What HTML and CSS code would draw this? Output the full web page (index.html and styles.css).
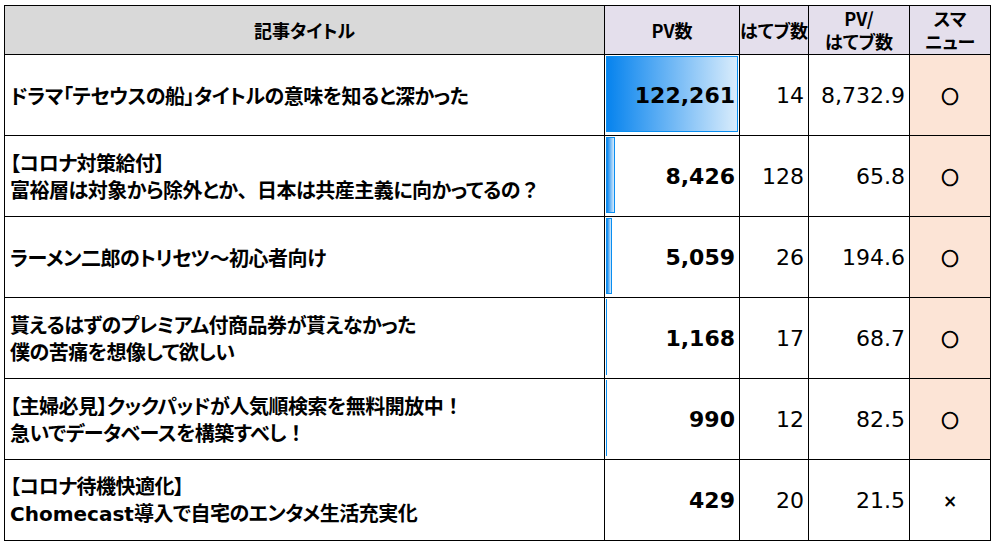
FILE: index.html
```html
<!DOCTYPE html>
<html lang="ja">
<head>
<meta charset="utf-8">
<title>記事ランキング</title>
<link rel="stylesheet" href="styles.css">
</head>
<body>
<table class="sheet">
  <colgroup>
    <col class="c-title">
    <col class="c-pv">
    <col class="c-hb">
    <col class="c-ratio">
    <col class="c-sm">
  </colgroup>
  <thead>
    <tr class="head">
      <th class="h-title">記事タイトル</th>
      <th class="h-lav">PV数</th>
      <th class="h-lav">はてブ数</th>
      <th class="h-lav"><span class="hl">PV/</span><span class="hl">はてブ数</span></th>
      <th class="h-lav"><span class="hl">スマ</span><span class="hl">ニュー</span></th>
    </tr>
  </thead>
  <tbody>
    <tr class="row">
      <td class="title">ドラマ「テセウスの船」タイトルの意味を知ると深かった</td>
      <td class="pv"><div class="pvwrap"><span class="bar" style="width:132px"></span><span class="num">122,261</span></div></td>
      <td class="val">14</td>
      <td class="val">8,732.9</td>
      <td class="sm peach"><span class="mark">○</span></td>
    </tr>
    <tr class="row">
      <td class="title">【コロナ対策給付】<br>富裕層は対象から除外とか<span class="fw">、</span>日本は共産主義に向かってるの<span class="fw">？</span></td>
      <td class="pv"><div class="pvwrap"><span class="bar" style="width:9px"></span><span class="num">8,426</span></div></td>
      <td class="val">128</td>
      <td class="val">65.8</td>
      <td class="sm peach"><span class="mark">○</span></td>
    </tr>
    <tr class="row">
      <td class="title">ラーメン二郎のトリセツ～初心者向け</td>
      <td class="pv"><div class="pvwrap"><span class="bar" style="width:5.5px"></span><span class="num">5,059</span></div></td>
      <td class="val">26</td>
      <td class="val">194.6</td>
      <td class="sm peach"><span class="mark">○</span></td>
    </tr>
    <tr class="row">
      <td class="title">貰えるはずのプレミアム付商品券が貰えなかった<br>僕の苦痛を想像して欲しい</td>
      <td class="pv"><div class="pvwrap"><span class="bar thin" style="width:1px"></span><span class="num">1,168</span></div></td>
      <td class="val">17</td>
      <td class="val">68.7</td>
      <td class="sm peach"><span class="mark">○</span></td>
    </tr>
    <tr class="row">
      <td class="title">【主婦必見】クックパッドが人気順検索を無料開放中<span class="fw">！</span><br>急いでデータベースを構築すべし<span class="fw">！</span></td>
      <td class="pv"><div class="pvwrap"><span class="bar thin" style="width:1px"></span><span class="num">990</span></div></td>
      <td class="val">12</td>
      <td class="val">82.5</td>
      <td class="sm peach"><span class="mark">○</span></td>
    </tr>
    <tr class="row">
      <td class="title">【コロナ待機快適化】<br><span class="latin">Chomecast</span>導入で自宅のエンタメ生活充実化</td>
      <td class="pv"><div class="pvwrap"><span class="num">429</span></div></td>
      <td class="val">20</td>
      <td class="val">21.5</td>
      <td class="sm"><span class="cross">×</span></td>
    </tr>
  </tbody>
</table>
</body>
</html>
```
FILE: styles.css
```css
html, body {
  margin: 0;
  padding: 0;
  background: #ffffff;
}
body {
  padding: 5px 0 0 4px;
  font-family: "Noto Sans CJK JP", "Noto Sans", sans-serif;
  color: #000;
}
.sheet {
  border-collapse: collapse;
  table-layout: fixed;
  width: 987px;
}
.c-title { width: 600px; }
.c-pv { width: 135px; }
.c-hb { width: 69px; }
.c-ratio { width: 101px; }
.c-sm { width: 81px; }

.sheet th, .sheet td {
  border: 1px solid #000;
  padding: 0;
}
.head { height: 49px; }
.row { height: 81px; }

.sheet th {
  font-weight: bold;
  font-size: 18px;
  line-height: 23px;
  text-align: center;
  white-space: nowrap;
  font-feature-settings: "palt";
}
.hl {
  display: block;
  height: 23px;
  line-height: 23px;
}
.h-title { background: #d9d9d9; }
.h-lav { background: #e4dfec; }

.title {
  font-weight: bold;
  font-size: 20px;
  line-height: 27px;
  letter-spacing: -0.5px;
  padding-left: 5px !important;
  white-space: nowrap;
  font-feature-settings: "palt";
  vertical-align: middle;
}
.fw {
  font-feature-settings: normal;
}
.latin {
  font-family: "DejaVu Sans", sans-serif;
  letter-spacing: 0;
}

.pv {
  height: 80px;
  vertical-align: top;
}
.pvwrap {
  position: relative;
  height: 80px;
  display: flex;
  align-items: center;
  justify-content: flex-end;
  padding-right: 4px;
}
.bar {
  position: absolute;
  left: 1px;
  top: 1px;
  bottom: 3px;
  box-sizing: border-box;
  border: 1px solid #0a8ef0;
  background: linear-gradient(to right, #0683ee 0%, #d9ecfc 100%);
}
.bar.thin {
  border-width: 0 0 0 1px;
}
.num {
  position: relative;
  font-family: "DejaVu Sans", sans-serif;
  font-weight: bold;
  font-size: 22px;
}

.val {
  font-family: "DejaVu Sans", sans-serif;
  font-size: 22px;
  text-align: right;
  padding-right: 4px !important;
  vertical-align: middle;
}

.sm {
  text-align: center;
  vertical-align: middle;
}
.peach { background: #fce4d6; }
.mark {
  font-family: "Noto Sans CJK JP", sans-serif;
  font-weight: bold;
  font-size: 17px;
  -webkit-text-stroke: 1.1px #000;
}
.cross {
  font-family: "DejaVu Sans", sans-serif;
  font-weight: bold;
  font-size: 17px;
}
```
